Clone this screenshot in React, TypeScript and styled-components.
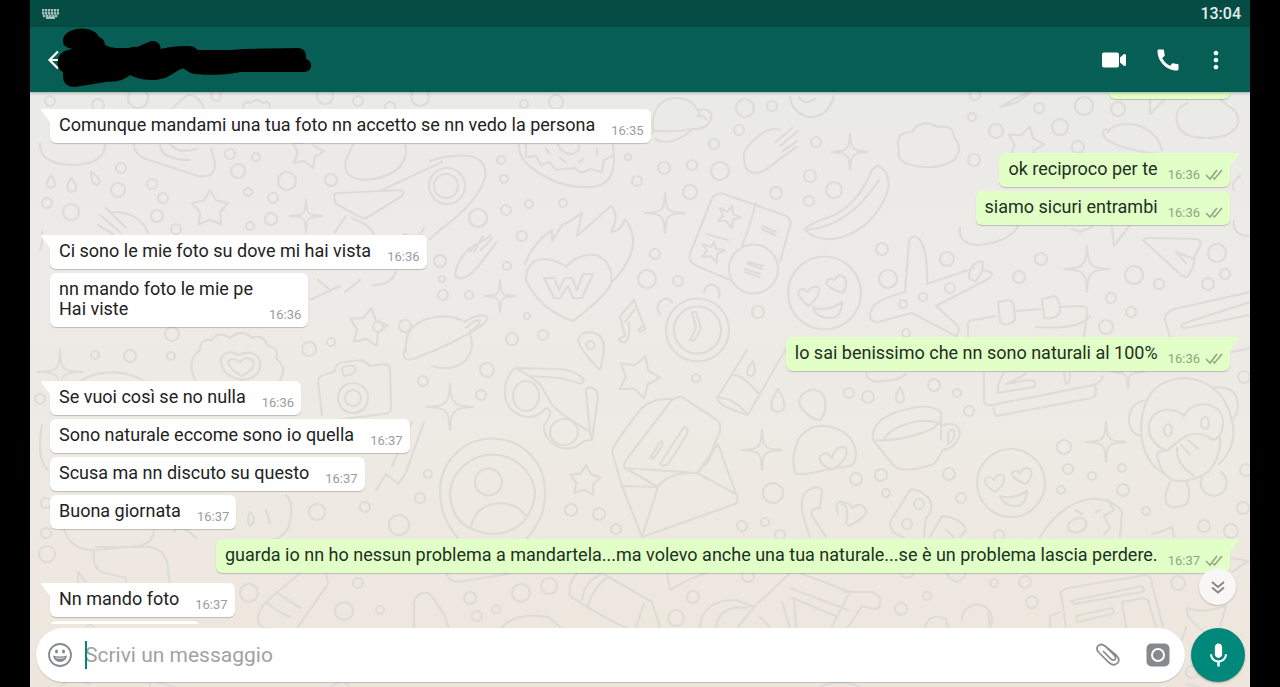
import React from "react";
import styled, { createGlobalStyle } from "styled-components";
import { MdCall, MdMic, MdMoreVert } from "react-icons/md";

const GlobalStyle = createGlobalStyle`
  * { box-sizing: border-box; }
  body { margin: 0; background: #000; font-family: Roboto, "Liberation Sans", sans-serif; }
  button { border: 0; padding: 0; background: none; color: inherit; cursor: pointer; }
`;

const Screen = styled.div`
  display: flex;
  flex-direction: column;
  height: 100vh;
  margin: 0 30px;
  overflow: hidden;
`;

const StatusBar = styled.div`
  flex: none;
  display: flex;
  align-items: center;
  justify-content: space-between;
  height: 27px;
  padding: 0 9px 0 12px;
  background: #054d44;
  color: #e4eeec;
`;

const Clock = styled.time`
  font-size: 16px;
  line-height: 20px;
  font-weight: 500;
`;

const AppBar = styled.header`
  flex: none;
  position: relative;
  z-index: 2;
  display: flex;
  align-items: center;
  justify-content: space-between;
  height: 65px;
  padding: 0 28px 0 16px;
  background: #075e54;
  color: #fff;
  box-shadow: 0 1px 3px rgba(0, 0, 0, 0.3);
`;

const IconButton = styled.button<{ $narrow?: boolean }>`
  display: flex;
  align-items: center;
  justify-content: center;
  width: ${(p) => (p.$narrow ? 12 : 24)}px;
  height: 24px;
  & > svg { flex: none; }
`;

const Actions = styled.div`
  display: flex;
  align-items: center;
  gap: 30px;
`;

const Redaction = styled.svg`
  position: absolute;
  left: 26px;
  top: 0;
  overflow: visible;
`;

const Chat = styled.main`
  position: relative;
  flex: 1;
  min-height: 0;
  display: flex;
  flex-direction: column;
  background: linear-gradient(#eaeae6 0%, #edebe7 35%, #eee9e3 68%, #eee6dc 100%);
`;

const Wallpaper = styled.svg`
  position: absolute;
  inset: 0;
  width: 100%;
  height: 100%;
`;

const Messages = styled.div`
  position: relative;
  flex: 1;
  min-height: 0;
  overflow: hidden;
  display: flex;
  flex-direction: column;
  gap: 10px;
  padding: 0 20px;
`;

const Group = styled.div<{ $out?: boolean }>`
  flex: none;
  display: flex;
  flex-direction: column;
  align-items: ${(p) => (p.$out ? "flex-end" : "flex-start")};
  gap: 4px;
`;

const Bubble = styled.div<{ $out?: boolean; $tail?: boolean }>`
  position: relative;
  display: flex;
  align-items: flex-end;
  gap: ${(p) => (p.$out ? 10 : 16)}px;
  padding: 6px 7px 8px 9px;
  border-radius: 6px;
  border-top-left-radius: ${(p) => (p.$tail && !p.$out ? 0 : 6)}px;
  border-top-right-radius: ${(p) => (p.$tail && p.$out ? 0 : 6)}px;
  background: ${(p) => (p.$out ? "#e1ffc7" : "#fff")};
  color: ${(p) => (p.$out ? "#20301c" : "#222")};
  box-shadow: 0 1px 1px rgba(0, 0, 0, 0.2);
`;

const CutBubble = styled.div<{ $out?: boolean }>`
  height: ${(p) => (p.$out ? 7 : 34)}px;
  width: ${(p) => (p.$out ? 121 : 150)}px;
  border-radius: ${(p) => (p.$out ? "0 0 6px 6px" : "6px")};
  background: ${(p) => (p.$out ? "#e1ffc7" : "#fff")};
  box-shadow: 0 1px 1px rgba(0, 0, 0, 0.2);
`;

const Tail = styled.svg<{ $out?: boolean }>`
  position: absolute;
  top: 0;
  ${(p) => (p.$out ? "right: -9px; transform: scaleX(-1);" : "left: -9px;")}
`;

const Text = styled.p`
  margin: 0;
  font-size: 18px;
  line-height: 20px;
  white-space: pre-line;
`;

const Meta = styled.span<{ $out?: boolean }>`
  display: flex;
  align-items: center;
  gap: 5px;
  margin-bottom: -4px;
  font-size: 13px;
  line-height: 16px;
  color: ${(p) => (p.$out ? "#8fa582" : "#9c9c9c")};
`;

const ScrollDown = styled.button`
  position: absolute;
  right: 14px;
  bottom: 19px;
  display: flex;
  align-items: center;
  justify-content: center;
  width: 37px;
  height: 37px;
  border-radius: 50%;
  background: #f8f7f5;
  color: #858585;
  box-shadow: 0 1px 2px rgba(0, 0, 0, 0.2);
`;

const Composer = styled.form`
  position: relative;
  flex: none;
  display: flex;
  align-items: center;
  gap: 6px;
  padding: 4px 5px 5px 6px;
`;

const Field = styled.div`
  flex: 1;
  display: flex;
  align-items: center;
  height: 54px;
  padding: 0 15px 0 12px;
  border-radius: 27px;
  background: #fff;
  color: #868a8d;
  box-shadow: 0 1px 1px rgba(0, 0, 0, 0.18);
`;

const InputWrap = styled.label`
  position: relative;
  flex: 1;
  display: flex;
  align-items: center;
  margin-left: 13px;
`;

const Caret = styled.span`
  position: absolute;
  left: 0;
  width: 2px;
  height: 28px;
  background: #00897b;
`;

const Input = styled.input`
  width: 100%;
  height: 32px;
  border: 0;
  padding: 0;
  outline: 0;
  background: transparent;
  font: 400 21px/28px Roboto, "Liberation Sans", sans-serif;
  &::placeholder { color: #a2a2a2; opacity: 1; }
`;

const FieldIcons = styled.div`
  display: flex;
  gap: 26px;
`;

const MicButton = styled.button`
  display: flex;
  align-items: center;
  justify-content: center;
  width: 54px;
  height: 54px;
  border-radius: 50%;
  background: #00897b;
  color: #fff;
  box-shadow: 0 1px 2px rgba(0, 0, 0, 0.25);
`;

type Message = { text: string; time: string };
type Thread = { out?: boolean; messages: Message[]; more?: boolean };

const threads: Thread[] = [
  { messages: [{ text: "Comunque mandami una tua foto nn accetto se nn vedo la persona", time: "16:35" }] },
  { out: true, messages: [{ text: "ok reciproco per te", time: "16:36" }, { text: "siamo sicuri entrambi", time: "16:36" }] },
  { messages: [{ text: "Ci sono le mie foto su dove mi hai vista", time: "16:36" }, { text: "nn mando foto le mie pe\nHai viste", time: "16:36" }] },
  { out: true, messages: [{ text: "lo sai benissimo che nn sono naturali al 100%", time: "16:36" }] },
  {
    messages: [
      { text: "Se vuoi così se no nulla", time: "16:36" },
      { text: "Sono naturale eccome sono io quella", time: "16:37" },
      { text: "Scusa ma nn discuto su questo", time: "16:37" },
      { text: "Buona giornata", time: "16:37" },
    ],
  },
  { out: true, messages: [{ text: "guarda io nn ho nessun problema a mandartela...ma volevo anche una tua naturale...se è un problema lascia perdere.", time: "16:37" }] },
  { messages: [{ text: "Nn mando foto", time: "16:37" }], more: true },
];

// x, y, radius of the confetti rings on the wallpaper
const rings: number[][] = [
  [50,101,5],[98,105,6],[138,98,10],[216,96,5],[325,96,8],[358,101,5],[390,107,5],[420,97,9],[230,154,5],[256,157,4],
  [238,171,7],[121,168,5],[287,181,9],[331,180,6],[152,184,5],[248,192,4],[163,198,5],[118,190,7],[273,198,5],[71,212,8],
  [47,203,5],[157,216,6],[271,219,6],[250,226,4],[176,229,5],[524,104,4],[556,102,7],[501,160,4],[504,179,4],[478,218,9],
  [506,210,5],[529,204,4],[563,203,4],[522,236,5],[507,266,4],[440,261,6],[442,279,3],[443,295,5],[469,295,4],[628,157,3],
  [637,181,5],[664,168,6],[692,165,5],[720,171,9],[690,192,7],[714,144,5],[739,130,5],[745,108,9],[772,106,5],[816,142,5],
  [810,176,6],[776,193,6],[809,201,5],[834,190,8],[655,254,5],[647,279,9],[678,281,5],[758,312,6],[512,339,6],[543,335,5],
  [527,316,3],[975,95,5],[972,117,4],[1039,108,5],[996,131,7],[1060,127,8],[1084,106,9],[1118,109,7],[1078,147,6],[974,160,6],
  [882,249,6],[888,279,9],[947,259,7],[1019,277,6],[1041,259,6],[1134,275,9],[1159,284,5],[1111,298,5],[1131,312,5],[1106,327,7],
  [1217,253,9],[1208,284,6],[1225,274,5],[903,304,4],[923,297,4],[950,288,5],[906,333,4],[849,393,5],[868,397,6],[934,385,6],
  [957,393,4],[969,411,5],[1244,377,6],[856,479,6],[881,475,6],[886,493,4],[949,474,6],[961,498,5],[1064,447,7],[1068,469,5],
  [1092,476,4],[1122,468,4],[1061,490,4],[1123,490,6],[1146,511,4],[1204,526,6],[1231,531,7],[1243,508,6],[1246,470,6],[999,535,5],
  [95,355,4],[130,356,6],[171,356,4],[309,349,7],[331,342,4],[423,381,5],[40,399,5],[378,327,5],[405,326,6],
  [317,512,8],[365,507,5],[399,525,10],[428,474,4],[420,498,5],[46,533,5],[47,554,8],[46,503,5],[249,593,9],[344,611,9],
  [358,583,5],[380,610,4],[487,370,7],[481,395,5],[571,510,6],[599,514,6],[616,529,5],[696,378,4],[773,493,10],[742,526,5],
  [765,522,4],[780,535,5],[470,598,6],[521,593,9],[549,586,8],[477,616,5],[496,609,4],[693,597,6],[676,618,8],[748,576,6],
  [994,583,4],[1025,582,6],[927,596,4],[901,609,6],[1032,602,6],[1178,583,7],[62,318,5],[172,334,7],
  [60,640,6],[90,630,5],[1192,672,6],
];

const starPath = (cx: number, cy: number, r: number, rot: number) =>
  Array.from({ length: 10 }, (_, i) => {
    const a = ((rot + i * 36 - 90) * Math.PI) / 180;
    const d = i % 2 ? r * 0.55 : r;
    return `${i ? "L" : "M"}${cx + d * Math.cos(a)} ${cy + d * Math.sin(a)}`;
  }).join("") + "Z";

const sparklePath = (cx: number, cy: number, r: number) => {
  const k = Math.round(r / 5);
  return `M${cx} ${cy - r}Q${cx + 1} ${cy - k} ${cx + k} ${cy - k}Q${cx + k} ${cy - 1} ${cx + r} ${cy}Q${cx + k} ${cy + 1} ${cx + k} ${cy + k}Q${cx + 1} ${cy + k} ${cx} ${cy + r}Q${cx - 1} ${cy + k} ${cx - k} ${cy + k}Q${cx - k} ${cy + 1} ${cx - r} ${cy}Q${cx - k} ${cy - 1} ${cx - k} ${cy - k}Q${cx - 1} ${cy - k} ${cx} ${cy - r}Z`;
};

const stars = [[307,152,17,15],[210,209,19,0],[368,328,20,10],[638,377,22,20],[585,481,16,5],[1025,145,19,15]];
const sparkles = [[306,216,16],[665,213,20],[500,296,16],[850,152,18],[450,407,23],[762,450,20],[1087,269,23],[1106,442,20],[1128,372,16],[60,372,22]];

const doodles: string[] = [
  // cloud, slice and drops at the top left
  "M40 143Q39 164 72 165Q105 164 105 145",
  "M134 144Q134 156 152 161L198 176Q216 179 215 162L211 148M160 145Q162 160 190 160M170 144Q178 154 196 149",
  "M51 175Q43 186 51 188Q59 186 51 175ZM71 178Q63 191 72 192Q81 190 71 178ZM91 172Q91 185 97 185Q104 180 91 172Z",
  "M172 109Q184 96 189 95Q198 95 204 108",
  "M243 108Q244 100 251 103Q257 97 263 103Q270 100 270 108",
  "M346 160Q342 175 358 179Q380 182 399 168Q409 155 405 144M346 160Q350 150 353 145",
  "M334 197Q333 193 340 193L400 190Q406 191 402 196L368 217Q364 220 358 216L336 204ZM382 190L442 162",
  "M346 216L335 232M352 218Q370 225 374 234M404 234Q420 240 424 228M100 215L120 232M106 208L126 228M98 225L113 234M112 212Q140 212 148 233",
  "M40 250Q44 238 42 232",
  // donut
  "M519 144Q518 158 532 168Q560 189 590 187Q614 186 614 160L613 144M526 144V157L536 156L541 165L549 162L556 170L575 168Q582 176 590 169L602 172L604 160L612 156M558 145Q562 154 572 154Q580 152 579 145M546 149L549 153M560 158L566 162M583 159L579 162M597 149V155",
  // fried egg
  "M430 161Q450 154 470 156Q488 160 485 178Q478 202 440 230L430 239M429 186A18 18 0 1 0 465 186A18 18 0 1 0 429 186M434 186A12 12 0 1 0 458 186A12 12 0 1 0 434 186",
  // planets
  "M653 133Q650 100 675 98Q695 98 700 116M655 139Q670 148 692 130M699 110Q713 108 711 119Q707 130 692 129Q670 133 653 130M697 116Q705 115 706 119",
  "M406 352Q404 330 420 322Q440 312 462 320M470 335Q476 350 464 362Q450 372 432 366M405 348Q400 364 416 358Q450 345 475 330Q490 320 487 317Q480 312 464 322M466 328Q476 318 480 321Q478 327 470 331",
  "M1108 132Q1112 124 1128 124Q1155 126 1162 150M1108 130Q1100 128 1105 138Q1120 150 1160 154",
  "M455 276Q456 262 468 250L490 236M455 276Q464 284 480 264L496 243M475 244L470 252M483 236L474 252M492 238L481 250",
  // flaming heart
  "M525 264Q532 244 552 230V241L562 225Q570 222 582 213L577 236Q586 228 611 206Q620 216 611 232Q620 232 625 219Q638 236 630 256Q624 270 612 282",
  "M573 321Q540 310 526 280Q526 260 544 259Q558 260 566 267Q578 253 596 255Q614 262 611 284Q604 298 573 321ZM544 278L554 298H560L568 286L573 298H582L593 274H583L577 290L572 278L565 278L559 290L554 278Z",
  // note and pin
  "M625 336L620 316L634 300L644 326M634 310L625 322M625 336Q617 338 620 341Q626 345 629 336V322M644 326Q636 330 640 332Q648 330 644 326",
  "M600 370Q580 350 578 340Q580 332 590 332Q602 333 604 345Q604 356 600 370ZM590 341A4 4 0 1 0 591 349A4 4 0 0 0 590 341",
  // calculator
  "M712 198Q716 192 724 194L784 215Q792 218 790 226L780 262M712 198L690 254Q688 262 697 266L730 280M756 203L748 230L742 246M706 234L728 240M732 206L733 214L741 217L733 220L732 228L726 221L718 221L723 216L720 208L727 212ZM714 242L716 249L725 250L717 254L717 263L711 256L702 257L707 251L703 244L711 247ZM762 226L776 232M762 229L775 235",
  "M729 269A24 24 0 1 0 778 269A24 24 0 1 0 729 269M748 262L763 266M748 264L762 269M745 269L760 274M745 272L759 277",
  // alarm clock
  "M666 330A31 31 0 1 0 729 330A31 31 0 1 0 666 330M674 330A23 23 0 1 0 721 330A23 23 0 1 0 674 330M660 314Q654 304 664 299Q671 298 672 303M704 292Q706 283 714 285Q722 290 719 297M692 312L696 328L690 340Q694 342 696 338L701 328L696 312Z",
  // hands and bananas
  "M744 158Q742 150 756 138Q770 126 780 130M744 158Q744 178 764 171L796 147M776 142L792 128M780 146L798 131M783 151L797 141",
  "M805 229Q812 222 830 217Q858 205 872 170L878 165L886 172Q892 186 884 200Q868 232 835 239Q812 240 805 229M808 230Q850 225 879 180",
  "M790 97Q792 112 808 117Q828 118 834 96M799 97Q804 106 815 99",
  // smileys with heart eyes
  "M788 293A36 36 0 1 0 861 293A36 36 0 1 0 788 293M813 307Q826 313 842 302Q842 318 830 318Q816 318 813 307ZM809 306Q798 298 798 292Q802 286 808 292Q812 284 819 288Q820 296 809 306ZM843 293Q832 290 826 284Q828 276 835 280Q838 272 845 278Q848 284 843 293Z",
  "M977 483A34 34 0 1 0 1045 483A34 34 0 1 0 977 483M1000 496Q1014 500 1027 491Q1026 506 1016 506Q1004 506 1000 496ZM995 492Q985 486 985 480Q989 474 994 480Q998 472 1004 476Q1006 484 995 492ZM1026 484Q1014 480 1012 474Q1014 468 1020 473Q1024 466 1030 469Q1034 476 1026 484Z",
  // clouds on the right
  "M899 150Q894 132 912 132Q920 118 938 127Q954 124 954 138Q964 148 954 160Q936 172 908 164Q896 160 899 150Z",
  "M1188 103Q1174 108 1177 122Q1180 138 1206 138Q1232 138 1238 124Q1240 112 1228 106L1220 99",
  "M1000 107L1028 92M1000 107L1018 102L1030 92M1150 93V114L1164 100",
  "M960 228Q958 244 978 245Q1010 242 1018 226M1072 229L1080 232L1092 227M1112 228L1114 246L1130 225",
  "M1234 220Q1232 236 1250 236M1240 176Q1230 182 1234 190",
  // aeroplane and plug
  "M905 292L909 242Q912 232 920 240Q928 252 927 284L974 268M983 270Q996 272 990 278L936 306L958 326Q960 332 956 336M956 336L912 313L878 322Q866 322 872 308Q876 300 905 292M970 271Q966 280 976 281L982 272L983 262Q974 260 970 271Z",
  // calendar
  "M968 337V324Q968 320 974 320L996 316M1016 311L1040 309M1060 307L1082 306Q1088 306 1087 314L1084 336M998 302L1008 300Q1014 300 1014 308L1015 320Q1006 328 1000 322ZM1042 299L1054 296Q1060 298 1060 312Q1056 320 1044 318ZM984 373V400Q984 406 992 405L1094 385Q1104 380 1102 376M993 408L996 416L1092 398Q1098 394 1095 387M1004 373Q996 386 998 393L1034 387Q1038 380 1028 380L1006 384Q1020 378 1026 373M1064 373L1066 384Q1070 384 1070 373",
  // paper plane and book
  "M1144 241Q1142 238 1150 238L1196 239Q1202 240 1200 246L1194 258Q1196 264 1188 276Q1184 278 1180 274ZM1176 252L1194 259M1176 252L1186 263",
  "M1170 337L1165 320Q1165 312 1174 309L1250 292M1182 324Q1180 328 1186 328L1250 315M1182 324L1250 302M1232 352L1250 348",
  // monkey
  "M1165 474Q1142 462 1141 430Q1142 380 1184 378Q1222 380 1232 420Q1238 446 1219 464M1148 400Q1129 402 1129 420Q1130 434 1141 436M1212 388Q1236 384 1238 404Q1238 416 1231 420",
  "M1167 451Q1147 442 1149 424Q1154 408 1172 410Q1181 412 1184 416Q1190 404 1206 404Q1224 408 1223 424Q1222 438 1213 440Q1200 430 1186 436Q1176 442 1167 451ZM1164 430A4 6 0 1 0 1172 430A4 6 0 1 0 1164 430M1201 423A4 6 0 1 0 1209 423A4 6 0 1 0 1201 423",
  "M1167 451Q1154 450 1158 459Q1160 472 1172 480Q1190 484 1208 472Q1221 458 1220 437L1213 440M1177 448Q1176 464 1194 476M1181 445L1190 455M1188 440L1198 449M1170 482Q1160 504 1172 507Q1184 508 1188 502Q1191 488 1186 482M1202 477A13 13 0 1 0 1221 472",
  // cup
  "M873 440Q870 420 900 411Q930 402 941 412Q944 422 930 430Q900 442 873 440M884 440Q890 426 920 421Q934 420 940 424M873 440L894 466Q904 474 934 464L942 452M941 426Q956 420 960 432Q958 448 942 450M948 436Q948 428 954 430Q956 440 948 444ZM941 415V440",
  "M866 373Q868 384 884 381Q900 380 906 374M900 387Q892 400 900 403Q908 402 900 387Z",
  // petals and camera
  "M195 380Q186 360 200 350Q200 338 212 340Q218 330 230 338Q242 328 252 338Q264 334 268 346Q280 348 276 358Q288 368 280 380M221 358Q228 348 238 355Q256 348 260 362Q262 378 242 380Q220 376 221 358ZM228 362Q232 356 240 362Q248 354 254 362Q254 370 242 376Q230 370 228 362",
  "M322 415L318 382Q318 376 326 374L334 372Q336 362 344 362L362 360L370 366L384 364Q390 364 390 370L391 408Q391 414 384 414L335 420M342 371Q341 366 348 366L354 366Q358 370 352 374L344 376ZM338 398A15 15 0 1 0 368 398A15 15 0 1 0 338 398M345 398A8 8 0 1 0 361 398A8 8 0 1 0 345 398",
  "M80 381Q98 370 122 373Q136 376 144 381",
  // sunglasses
  "M505 395Q504 378 515 368Q524 372 540 384L552 405L562 414L590 432L592 440L584 441Q575 450 562 448Q544 442 544 426Q555 410 546 408Q536 420 522 416Q506 410 505 395ZM513 396A13 15 0 1 0 539 396A13 15 0 1 0 513 396M550 432A14 13 0 1 0 578 432A14 13 0 1 0 550 432M515 368L560 369Q576 370 584 380Q582 386 576 382L560 378L528 376M590 432L586 392Q586 386 592 388Q600 390 597 404L592 440",
  // avatar badge
  "M440 491A52 52 0 0 1 545 491Q546 518 527 538M440 491Q440 518 458 538M450 491A43 43 0 0 1 535 491Q535 508 523 522Q510 534 492 534Q450 530 450 491M475 482A13 13 0 1 0 502 482A13 13 0 1 0 475 482M471 527Q476 504 500 503Q518 504 525 515",
  // envelope
  "M642 537L622 486L612 452Q612 446 640 410Q650 398 674 399M625 468Q622 464 630 455L668 405Q674 396 682 397L714 418Q724 424 718 436L708 462L697 473ZM622 486L658 487L642 537L735 504Q740 500 736 494L697 473Q668 472 658 487L625 468M697 473L718 444L736 494M650 458L660 442Q664 440 662 446L653 459ZM660 464L684 427Q690 428 686 436L668 464Q662 467 660 464Z",
  // paint tube and drops
  "M747 350L717 398Q718 406 748 415L788 345M732 375Q742 374 758 393M717 398Q732 396 748 415M753 361Q743 374 750 376Q758 376 753 361ZM778 389Q766 408 776 412Q792 412 778 389ZM810 390Q796 396 800 406Q810 420 820 420Q828 412 824 396Q818 388 810 390",
  // cap with heart
  "M796 474Q790 460 798 440Q808 424 826 426Q852 430 856 452Q856 464 850 466L824 470Q810 475 796 474ZM832 470Q818 464 820 456Q826 450 832 458Q836 444 846 448Q850 458 832 470Z",
  "M810 537Q796 500 806 492Q816 484 822 490L820 508Q810 508 812 516L826 537M838 514Q834 500 842 502Q850 508 846 524M842 504Q848 500 852 508Q862 500 867 512Q860 522 848 526",
  // controller and blocks
  "M910 490Q920 488 930 500Q934 512 926 518L924 537M910 490L890 522Q890 534 904 537M914 504A5 5 0 1 0 924 504A5 5 0 1 0 914 504M902 524A5 5 0 1 0 912 524A5 5 0 1 0 902 524M930 537L942 516Q962 518 966 530L960 537M946 530L954 537M900 573Q906 582 914 574M946 573Q958 590 966 573",
  "M1040 537Q1060 504 1090 499Q1112 498 1122 512L1120 537M1108 500L1114 510L1104 516L1110 528L1104 534M1068 526Q1070 518 1082 518Q1092 524 1080 532Q1068 534 1068 526ZM1076 510L1082 514M1096 512L1100 510M1152 534L1160 532L1172 527L1174 537",
  // papers, pencils, bones and pizza along the bottom
  "M64 529Q70 550 94 550L140 546Q154 542 154 529M94 550Q92 568 102 572L126 578V584M96 547H150Q168 550 168 572L170 583M174 532Q180 522 196 538M286 495Q296 505 288 528Q280 542 264 540M250 512Q246 520 250 526Q258 520 250 512ZM266 510L270 524M424 422L405 475L398 484L386 474L376 490M412 422L392 466",
  "M78 582V572L86 582M262 627Q252 618 266 602L300 573M262 627L290 638L328 584L326 573M266 602Q274 610 290 617M276 592L300 608M414 627V602Q418 590 430 594L444 614L448 627",
  "M447 573Q448 584 464 581L508 574M502 627Q516 612 548 617L560 627M570 596Q568 580 578 573L602 573L652 602L660 627M570 596Q600 616 630 630M582 600Q584 582 600 575M588 605Q592 590 606 578M644 604L636 627",
  "M667 573L670 590L688 580L706 573M700 627Q702 600 736 600L754 607L790 573M754 607L738 627M716 627Q720 604 748 608M790 588L848 610M782 602L790 627M792 598L836 616M794 598L796 627M760 617L770 627M800 573L850 592L832 626",
  "M844 592H872Q882 596 880 604Q880 612 862 606L848 627M925 627Q930 612 946 619L948 627M962 620A15 15 0 1 1 990 627M990 627L988 612",
  "M1066 627L1061 594Q1060 590 1068 588L1146 575Q1152 576 1152 584L1163 627M1071 601L1142 586Q1146 590 1142 592L1074 604ZM1076 616L1112 608Q1116 612 1112 614L1078 622ZM1126 627L1122 602L1144 598Q1150 600 1150 608L1156 627M1050 627V616L1060 612",
  "M1187 608Q1200 614 1226 606L1220 627M1187 608Q1184 616 1204 632M1232 558L1248 561L1232 572M1186 627L1182 640",
  "M60 687Q70 676 90 684M150 687V680L175 687M330 687L342 680L350 687M820 687Q840 678 860 687M1186 684L1200 687",
  "M310 300L340 286M345 292L360 280M330 290L318 280M372 285Q390 286 396 272M1036 327Q1080 330 1090 316M42 425Q36 460 48 470",
];

function WallpaperArt() {
  return (
    <Wallpaper viewBox="30 92 1220 595" preserveAspectRatio="xMidYMid slice" aria-hidden="true">
      <g fill="none" stroke="#dedcd6" strokeWidth="2.2" strokeLinejoin="round" strokeLinecap="round">
        {rings.map(([x, y, r], i) => <circle key={i} cx={x} cy={y} r={r} />)}
        {stars.map(([x, y, r, a], i) => <path key={i} d={starPath(x, y, r, a)} />)}
        {sparkles.map(([x, y, r], i) => <path key={i} d={sparklePath(x, y, r)} />)}
        {doodles.map((d, i) => <path key={i} d={d} />)}
      </g>
    </Wallpaper>
  );
}

function Ticks() {
  return (
    <svg width="18" height="12" viewBox="0 0 18 12" fill="none" stroke="currentColor" strokeWidth="1.5" aria-label="Consegnato">
      <path d="M1 6l4 4L12 1M8 8.500l1.500 1.500L17 1" />
    </svg>
  );
}

function MessageBubble({ message, out, tail }: { message: Message; out?: boolean; tail: boolean }) {
  return (
    <Bubble $out={out} $tail={tail}>
      {tail && (
        <Tail $out={out} width="9" height="13" viewBox="0 0 9 13" aria-hidden="true">
          <path d="M9 0H1Q-0.500 0.500 0.500 2L9 13Z" fill={out ? "#e1ffc7" : "#fff"} />
        </Tail>
      )}
      <Text>{message.text}</Text>
      <Meta $out={out}>
        <time>{message.time}</time>
        {out && <Ticks />}
      </Meta>
    </Bubble>
  );
}

export default function App() {
  return (
    <>
      <GlobalStyle />
      <Screen>
        <StatusBar>
          <svg width="17" height="10" viewBox="0 0 17 10" fill="none" stroke="#a5c0bb" strokeWidth="2.400" aria-hidden="true">
            <path d="M0 1.200H17M0 4.200H17M1 7H16" strokeDasharray="2.300 0.700" />
            <path d="M4 8.800H13" />
          </svg>
          <Clock>13:04</Clock>
        </StatusBar>
        <AppBar>
          <IconButton aria-label="Indietro">
            <svg width="24" height="24" viewBox="0 0 24 24" fill="none" stroke="currentColor" strokeWidth="2.200">
              <path d="M12 3.500L3.500 12L12 20.500M3.500 12H20" />
            </svg>
          </IconButton>
          <Redaction width="256" height="60" viewBox="56 27 256 60" aria-hidden="true">
            <path d="M63 42C62 34 71 28.500 82 28.500C90 28.500 97 32 99 37C104 39 105 42 105 45Q110 48 116 48H129Q133 46 137 47L150 41.500C155 40 161 43 160.500 49C172 46 188 45 194 47L198 50H230L245 49L298 48C304 48 307 53 306 59C313 61 313 71 305 72H240C228 75 205 75.500 195 74C188 73 186 69 183 68.500C175 70 170 80 152 80C141 80 134 77 130 75C123 81 117 81.500 106 82L75 87C67 87 63 83 63 76V72C56 69 56 57 62 53C64 50 70 50 72 48.500C66 48 63 45 63 42Z" />
          </Redaction>
          <Actions>
            <IconButton aria-label="Videochiamata">
              <svg width="24" height="24" viewBox="0 0 24 24" fill="currentColor">
                <path d="M2 4.500H15Q17 4.500 17 6.500V17.500Q17 19.500 15 19.500H2Q0 19.500 0 17.500V6.500Q0 4.500 2 4.500ZM18 9.500L22 6Q24 5.500 24 7.500V16.500Q24 18.500 22 18L18 14.500Z" />
              </svg>
            </IconButton>
            <IconButton aria-label="Chiama"><MdCall size={28} /></IconButton>
            <IconButton $narrow aria-label="Altre opzioni"><MdMoreVert size={28} /></IconButton>
          </Actions>
        </AppBar>
        <Chat>
          <WallpaperArt />
          <Messages>
            <Group $out><CutBubble $out /></Group>
            {threads.map((t, i) => (
              <Group key={i} $out={t.out}>
                {t.messages.map((m, j) => <MessageBubble key={j} message={m} out={t.out} tail={j === 0} />)}
                {t.more && <CutBubble />}
              </Group>
            ))}
            <ScrollDown aria-label="Vai in fondo">
              <svg width="16" height="16" viewBox="0 0 16 16" fill="none" stroke="currentColor" strokeWidth="1.800">
                <path d="M2 3L8 8L14 3M2 8.500L8 13.500L14 8.500" />
              </svg>
            </ScrollDown>
          </Messages>
          <Composer>
            <Field>
              <IconButton type="button" aria-label="Emoji">
                <svg width="24" height="24" viewBox="0 0 24 24" fill="none" stroke="currentColor" strokeWidth="1.800">
                  <circle cx="12" cy="12" r="11" />
                  <g fill="currentColor" stroke="none">
                    <ellipse cx="8.500" cy="8.500" rx="1.500" ry="2" />
                    <ellipse cx="15.500" cy="8.500" rx="1.500" ry="2" />
                    <path d="M5 12.500Q12 14.500 19 12.500Q18 19 12 19Q6 19 5 12.500ZM7.500 15Q12 16.200 16.500 15V14.200Q12 15.200 7.500 14.200Z" fillRule="evenodd" />
                  </g>
                </svg>
              </IconButton>
              <InputWrap>
                <Input type="text" placeholder="Scrivi un messaggio" aria-label="Scrivi un messaggio" />
                <Caret />
              </InputWrap>
              <FieldIcons>
                <IconButton type="button" aria-label="Allega">
                  <svg width="24" height="24" viewBox="0 0 24 24" fill="none" stroke="currentColor" strokeWidth="1.700" strokeLinecap="round">
                    <path d="M9 3L20.500 12.500Q24.500 16.500 21.500 20Q18 23.500 13.500 20L2.800 9.500Q-0.500 6 2 3Q5 0 9 3L18.500 12.500Q20.500 15 19 16.500Q17.500 18 15 16L7.500 8.500" />
                  </svg>
                </IconButton>
                <IconButton type="button" aria-label="Fotocamera">
                  <svg width="24" height="24" viewBox="0 0 24 24">
                    <rect x="0.500" y="0.500" width="23" height="23" rx="5" fill="currentColor" />
                    <circle cx="12" cy="12" r="6" fill="none" stroke="#fff" strokeWidth="2" />
                  </svg>
                </IconButton>
              </FieldIcons>
            </Field>
            <MicButton type="button" aria-label="Messaggio vocale"><MdMic size={29} /></MicButton>
          </Composer>
        </Chat>
      </Screen>
    </>
  );
}
